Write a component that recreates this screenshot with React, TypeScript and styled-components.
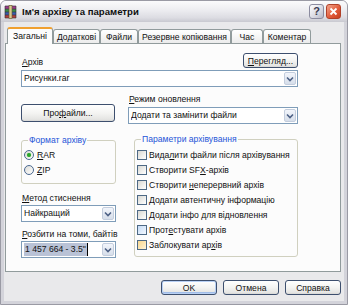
import React from 'react';
import styled, { createGlobalStyle, css } from 'styled-components';

const Global = createGlobalStyle`
  html, body { margin: 0; padding: 0; background: #ffffff; }
  body {
    width: 348px; height: 305px; overflow: hidden;
    font-family: "Liberation Sans", Arial, sans-serif;
    font-size: 8.6px; color: #111;
  }
  * { box-sizing: border-box; }
`;

const Window = styled.div`
  width: 348px;
  height: 305px;
  display: flex;
  flex-direction: column;
  border: 1px solid #9a9aa4;
  border-radius: 6px 6px 0 0;
  background: #d3d3da;
  overflow: hidden;
`;

const TitleBar = styled.div`
  height: 21px;
  flex: none;
  display: flex;
  align-items: center;
  padding: 0 6px 0 3px;
  background: linear-gradient(#fbfbfc 0%, #ececf0 45%, #dcdce2 80%, #c9c9d0 100%);
`;

const TitleText = styled.span`
  margin-left: 4px;
  font-weight: bold;
  font-size: 9.6px;
  color: #101010;
  flex: 1;
`;

const CaptionButton = styled.div<{ $close?: boolean }>`
  width: 15px;
  height: 15px;
  margin-left: 2px;
  border-radius: 3px;
  display: flex;
  align-items: center;
  justify-content: center;
  ${(p) =>
    p.$close
      ? css`
          background: linear-gradient(135deg, #f2a48c, #e25c3c 55%, #c8401f);
          border: 1px solid #b04028;
        `
      : css`
          background: linear-gradient(135deg, #ffffff, #d8d8e2 60%, #b8b8c6);
          border: 1px solid #8c8ca0;
        `}
`;

const Client = styled.div`
  flex: 1;
  margin: 0 3px 3px 3px;
  padding: 5px 3px 0 1px;
  background: #e9e9eb;
  display: flex;
  flex-direction: column;
`;

const TabRow = styled.div`
  display: flex;
  align-items: flex-end;
  padding-left: 2px;
  height: 16px;
  position: relative;
  z-index: 1;
`;

const Tab = styled.div<{ $w: number; $active?: boolean }>`
  width: ${(p) => p.$w}px;
  height: ${(p) => (p.$active ? 17 : 14)}px;
  display: flex;
  align-items: center;
  justify-content: center;
  border: 1px solid #919b9c;
  border-bottom: none;
  border-radius: 3px 3px 0 0;
  white-space: nowrap;
  ${(p) =>
    p.$active
      ? css`
          background: #fcfcfc;
          border-top: 2px solid #f0a030;
          margin-bottom: -1px;
          padding-bottom: 1px;
        `
      : css`
          background: linear-gradient(#ffffff, #ececec);
          padding-top: 1px;
        `}
`;

const Panel = styled.div`
  height: 229px;
  border: 1px solid #919b9c;
  background: #fcfcfc;
  padding: 8px 42px 0 15px;
  display: flex;
  flex-direction: column;
`;

const TopRow = styled.div`
  display: flex;
  justify-content: space-between;
  align-items: flex-end;
  height: 16px;
`;

const Label = styled.div<{ $mt?: number }>`
  line-height: 11px;
  height: 11px;
  margin-top: ${(p) => p.$mt ?? 0}px;
  padding-left: 1px;
  white-space: nowrap;
`;

const U = styled.span`
  text-decoration: underline;
`;

const Button = styled.div<{ $w: number; $h?: number; $mt?: number; $default?: boolean }>`
  width: ${(p) => p.$w}px;
  height: ${(p) => p.$h ?? 15}px;
  margin-top: ${(p) => p.$mt ?? 0}px;
  flex: none;
  display: flex;
  align-items: center;
  justify-content: center;
  border: 1px solid #3d4f6e;
  border-radius: 3px;
  background: linear-gradient(#ffffff 0%, #f4f4f2 50%, #e4e4e2 90%, #d6d6d4 100%);
  white-space: nowrap;
  ${(p) =>
    p.$default &&
    css`
      box-shadow: inset 0 0 0 1px #b8d0f4, inset 0 -1px 0 1px #a0bce8;
    `}
`;

const ComboBox = styled.div<{ $mt?: number }>`
  height: 17px;
  margin-top: ${(p) => p.$mt ?? 0}px;
  border: 1px solid #7f9db9;
  background: #ffffff;
  display: flex;
  align-items: center;
  padding: 1px 1px 1px 2px;
`;

const ComboText = styled.span<{ $selected?: boolean }>`
  flex: 1;
  white-space: nowrap;
  overflow: hidden;
  line-height: 13px;
  ${(p) =>
    p.$selected &&
    css`
      flex: none;
      background: #b9c2d6;
      padding: 0 1px;
      border-right: 1px solid #000;
    `}
`;

const Spacer = styled.div`
  flex: 1;
`;

const DropButton = styled.div`
  width: 12px;
  height: 13px;
  flex: none;
  border: 1px solid #c3cddd;
  border-radius: 2px;
  background: linear-gradient(#f2f5fb, #d6deea);
  display: flex;
  align-items: center;
  justify-content: center;
`;

const Columns = styled.div`
  display: grid;
  grid-template-columns: 95px 1fr;
  column-gap: 12px;
  margin-top: 7px;
`;

const Column = styled.div`
  display: flex;
  flex-direction: column;
`;

const Group = styled.fieldset<{ $mt: number; $ml?: number; $h: number }>`
  margin: ${(p) => p.$mt}px 0 0 ${(p) => p.$ml ?? 0}px;
  padding: 0 2px 0 2px;
  height: ${(p) => p.$h}px;
  border: 1px solid #d0d0bf;
  border-radius: 3px;
  min-width: 0;
`;

const Legend = styled.legend`
  margin-left: 4px;
  padding: 0 1px;
  line-height: 10px;
  color: #1f55d8;
  white-space: nowrap;
`;

const OptionList = styled.div<{ $pt: number }>`
  display: flex;
  flex-direction: column;
  padding-top: ${(p) => p.$pt}px;
`;

const OptionRow = styled.div`
  height: 15px;
  display: flex;
  align-items: center;
  white-space: nowrap;
`;

const Radio = styled.div<{ $checked?: boolean }>`
  width: 10px;
  height: 10px;
  border-radius: 50%;
  border: 1px solid #4a6890;
  background: linear-gradient(135deg, #dcdcd6, #ffffff);
  margin-right: 3px;
  display: flex;
  align-items: center;
  justify-content: center;
  &::after {
    content: '';
    display: ${(p) => (p.$checked ? 'block' : 'none')};
    width: 4px;
    height: 4px;
    border-radius: 50%;
    background: #2aa52a;
    box-shadow: 0 0 1px #60d060;
  }
`;

const tones = {
  normal: 'linear-gradient(135deg, #d8d8d2, #f4f4f2 70%, #ffffff)',
  hover: 'linear-gradient(135deg, #c4dbf6, #e6f0fc 70%, #f4f8fe)',
  hot: 'linear-gradient(135deg, #f8d890, #fbe7b8 60%, #fdf4dc)',
};

const Check = styled.div<{ $tone: keyof typeof tones }>`
  width: 10px;
  height: 10px;
  border: 1px solid #4d6985;
  background: ${(p) => tones[p.$tone]};
  margin-right: 2px;
  flex: none;
`;

const ButtonRow = styled.div`
  display: flex;
  justify-content: flex-end;
  gap: 6px;
  margin-top: 8px;
`;

const Chevron = () => (
  <svg width="8" height="6" viewBox="0 0 8 6">
    <path d="M1 1.5 L4 4.5 L7 1.5" fill="none" stroke="#4d6185" strokeWidth="1.6" />
  </svg>
);

const RarIcon = () => (
  <svg width="14" height="14" viewBox="0 0 14 14">
    <rect x="1" y="1" width="11" height="3" fill="#9a3c8c" />
    <rect x="1" y="4" width="11" height="3" fill="#3c8c4c" />
    <rect x="1" y="7" width="11" height="3" fill="#3c5cb0" />
    <rect x="1" y="10" width="11" height="3" fill="#b04040" />
    <path d="M1 1 h11 v12 h-11 z M1 4 h11 M1 7 h11 M1 10 h11" fill="none" stroke="#303030" strokeWidth="0.6" />
    <rect x="5" y="0.5" width="3" height="13" fill="#d8c890" stroke="#6a5a30" strokeWidth="0.6" />
  </svg>
);

const HelpGlyph = styled.span`
  font-size: 11px;
  font-weight: bold;
  color: #3a3a50;
  line-height: 11px;
`;

const CloseGlyph = () => (
  <svg width="9" height="9" viewBox="0 0 9 9">
    <path d="M1.5 1.5 L7.5 7.5 M7.5 1.5 L1.5 7.5" stroke="#ffffff" strokeWidth="1.8" />
  </svg>
);

const Combo: React.FC<{ mt?: number; children: React.ReactNode; selected?: boolean }> = ({ mt, children, selected }) => (
  <ComboBox $mt={mt}>
    <ComboText $selected={selected}>{children}</ComboText>
    {selected && <Spacer />}
    <DropButton>
      <Chevron />
    </DropButton>
  </ComboBox>
);

export default function App() {
  return (
    <>
      <Global />
      <Window>
        <TitleBar>
          <RarIcon />
          <TitleText>Ім'я архіву та параметри</TitleText>
          <CaptionButton>
            <HelpGlyph>?</HelpGlyph>
          </CaptionButton>
          <CaptionButton $close>
            <CloseGlyph />
          </CaptionButton>
        </TitleBar>
        <Client>
          <TabRow>
            <Tab $w={46} $active>Загальні</Tab>
            <Tab $w={47}>Додаткові</Tab>
            <Tab $w={38}>Файли</Tab>
            <Tab $w={93}>Резервне копіювання</Tab>
            <Tab $w={32}>Час</Tab>
            <Tab $w={48}>Коментар</Tab>
          </TabRow>
          <Panel>
            <TopRow>
              <Label>
                <U>А</U>рхів
              </Label>
              <Button $w={55}>
                <U>П</U>ерегляд...
              </Button>
            </TopRow>
            <Combo mt={2}>Рисунки.rar</Combo>
            <Columns>
              <Column>
                <Button $w={94} $h={18} $mt={10}>
                  Про<U>ф</U>айли...
                </Button>
                <Group $mt={13} $h={49}>
                  <Legend>Формат архіву</Legend>
                  <OptionList $pt={2}>
                    <OptionRow>
                      <Radio $checked />
                      <span>
                        <U>R</U>AR
                      </span>
                    </OptionRow>
                    <OptionRow>
                      <Radio />
                      <span>
                        <U>Z</U>IP
                      </span>
                    </OptionRow>
                  </OptionList>
                </Group>
                <Label $mt={9}>
                  <U>М</U>етод стиснення
                </Label>
                <Combo mt={1}>Найкращий</Combo>
                <Label $mt={7}>
                  <U>Р</U>озбити на томи, байтів
                </Label>
                <Combo mt={1} selected>
                  1 457 664 - 3.5"
                </Combo>
              </Column>
              <Column>
                <Label>
                  <U>Р</U>ежим оновлення
                </Label>
                <Combo mt={2}>Додати та замінити файли</Combo>
                <Group $mt={10} $ml={6} $h={123}>
                  <Legend>Параметри архівування</Legend>
                  <OptionList $pt={3}>
                    <OptionRow>
                      <Check $tone="normal" />
                      <span>
                        Вида<U>л</U>ити файли після архівування
                      </span>
                    </OptionRow>
                    <OptionRow>
                      <Check $tone="normal" />
                      <span>
                        Створити SF<U>X</U>-архів
                      </span>
                    </OptionRow>
                    <OptionRow>
                      <Check $tone="normal" />
                      <span>
                        Створити <U>н</U>еперервний архів
                      </span>
                    </OptionRow>
                    <OptionRow>
                      <Check $tone="normal" />
                      <span>Додати автентичну інформацію</span>
                    </OptionRow>
                    <OptionRow>
                      <Check $tone="normal" />
                      <span>
                        <U>Д</U>одати інфо для відновлення
                      </span>
                    </OptionRow>
                    <OptionRow>
                      <Check $tone="hover" />
                      <span>
                        Прот<U>е</U>стувати архів
                      </span>
                    </OptionRow>
                    <OptionRow>
                      <Check $tone="hot" />
                      <span>
                        Заблокувати ар<U>х</U>ів
                      </span>
                    </OptionRow>
                  </OptionList>
                </Group>
              </Column>
            </Columns>
          </Panel>
          <ButtonRow>
            <Button $w={56} $default>
              OK
            </Button>
            <Button $w={56}>Отмена</Button>
            <Button $w={56}>Справка</Button>
          </ButtonRow>
        </Client>
      </Window>
    </>
  );
}
